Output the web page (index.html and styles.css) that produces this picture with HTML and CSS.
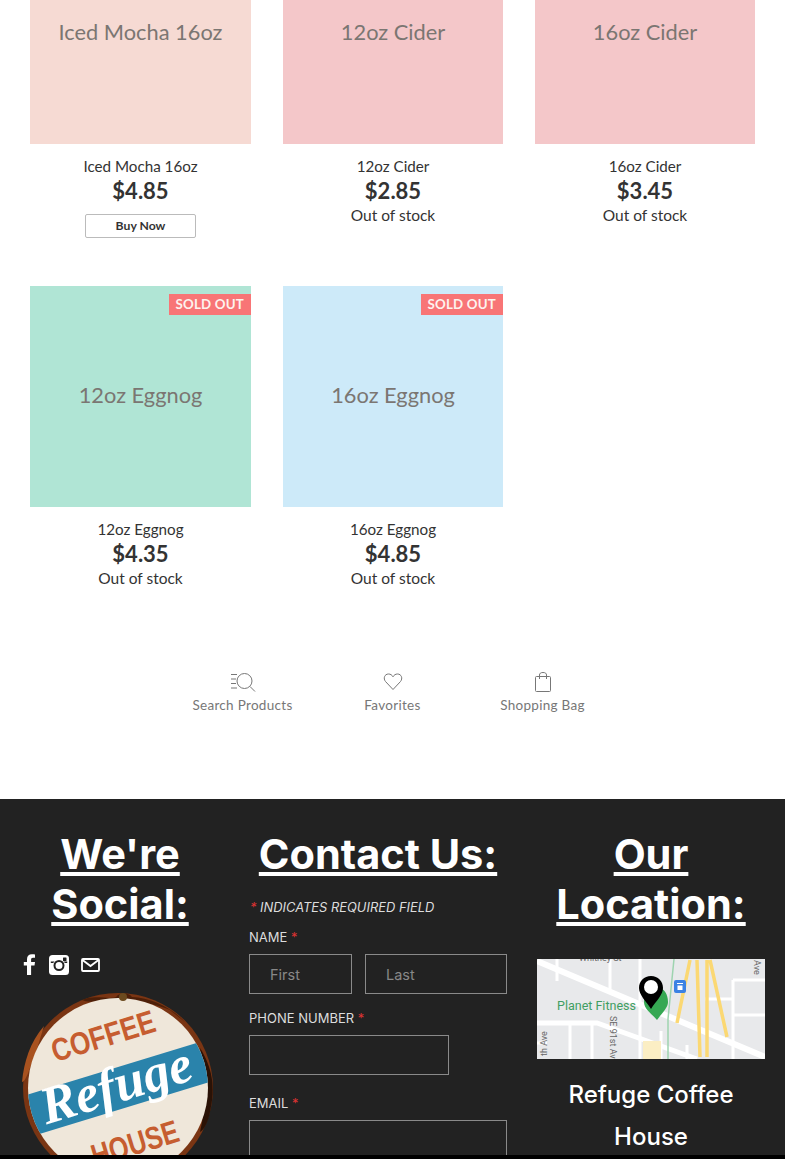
FILE: index.html
```html
<!DOCTYPE html>
<html lang="en">
<head>
    <meta charset="UTF-8">
    <meta name="viewport" content="width=device-width, initial-scale=1.0">
    <title>Refuge Coffee House</title>
    <link rel="stylesheet" href="styles.css">
</head>
<body>
    <div class="products">
        <div class="product">
            <div class="tile tile-beige">Iced Mocha 16oz</div>
            <div class="name">Iced Mocha 16oz</div>
            <div class="price">$4.85</div>
            <button class="buy-btn">Buy Now</button>
        </div>
        <div class="product">
            <div class="tile tile-pink">12oz Cider</div>
            <div class="name">12oz Cider</div>
            <div class="price">$2.85</div>
            <div class="stock">Out of stock</div>
        </div>
        <div class="product">
            <div class="tile tile-pink">16oz Cider</div>
            <div class="name">16oz Cider</div>
            <div class="price">$3.45</div>
            <div class="stock">Out of stock</div>
        </div>
        <div class="product">
            <div class="tile tile-mint">12oz Eggnog<span class="badge">SOLD OUT</span></div>
            <div class="name">12oz Eggnog</div>
            <div class="price">$4.35</div>
            <div class="stock">Out of stock</div>
        </div>
        <div class="product">
            <div class="tile tile-blue">16oz Eggnog<span class="badge">SOLD OUT</span></div>
            <div class="name">16oz Eggnog</div>
            <div class="price">$4.85</div>
            <div class="stock">Out of stock</div>
        </div>
    </div>

    <div class="shop-tools">
        <div class="tool">
            <svg width="26" height="20" viewBox="0 0 26 20" fill="none" stroke="#777" stroke-width="1">
                <path d="M1 2.500h6M1 7h5M1 11.500h5M1 16h6"/>
                <circle cx="14.500" cy="9" r="7.500"/>
                <path d="M20 14.500l5 5"/>
            </svg>
            <span>Search Products</span>
        </div>
        <div class="tool">
            <svg width="20" height="20" viewBox="0 0 20 20" fill="none" stroke="#777" stroke-width="1">
                <path d="M10 17.500L2.500 9.500C0 6.500 1.500 2 5.500 2C7.500 2 9 3 10 4.800C11 3 12.500 2 14.500 2C18.500 2 20 6.500 17.500 9.500Z"/>
            </svg>
            <span>Favorites</span>
        </div>
        <div class="tool">
            <svg width="18" height="20" viewBox="0 0 18 20" fill="none" stroke="#777" stroke-width="1">
                <rect x="1.500" y="4.500" width="15" height="15" rx="1"/>
                <path d="M5.500 7V3C5.500 1.500 6.500 .5 9 .5C11.500 .5 12.500 1.500 12.500 3V7"/>
            </svg>
            <span>Shopping Bag</span>
        </div>
    </div>

    <div class="footer">
        <div class="col-social">
            <h2>We're Social:</h2>
            <div class="social-icons">
                <svg width="14" height="21" viewBox="0 0 14 21" fill="#fff">
                    <path d="M4 21V11.500H.8V8H4V5.200C4 2 6 .3 8.800 .3C10.200 .3 11.300 .4 12 .5V3.700H10C8.500 3.700 8.100 4.500 8.100 5.600V8H12L11.500 11.500H8.100V21Z"/>
                </svg>
                <svg width="20" height="20" viewBox="0 0 20 20">
                    <rect width="20" height="20" rx="3.500" fill="#fff"/>
                    <rect x="1.800" y="6.500" width="16.400" height="1.500" fill="#222"/>
                    <circle cx="10" cy="10.500" r="6.200" fill="#fff"/>
                    <circle cx="10" cy="10.500" r="4.500" fill="none" stroke="#222" stroke-width="2"/>
                    <rect x="14" y="2.500" width="3.500" height="3.500" rx=".5" fill="#222"/>
                </svg>
                <svg width="19" height="14" viewBox="0 0 19 14" fill="none" stroke="#fff" stroke-width="1.800">
                    <rect x="1" y="1" width="17" height="12" rx="1"/>
                    <path d="M1.500 2l8 6 8-6"/>
                </svg>
            </div>
            <svg class="logo" width="200" height="170" viewBox="0 0 200 170">
                <defs>
                    <clipPath id="logo-clip"><circle cx="98" cy="96" r="90"/></clipPath>
                </defs>
                <circle cx="98" cy="96" r="95" fill="#7a3513"/>
                <path d="M62 8C74 2 88 8 96 5C100 0 108 0 112 5C130 6 150 14 165 30L150 18C130 10 110 8 98 10C85 8 72 12 62 8Z" fill="#4d1f08"/>
                <path d="M180 56C192 75 196 95 190 120C188 130 184 138 180 140C186 115 186 85 180 56Z" fill="#2a1206"/>
                <path d="M2 90C4 70 10 50 24 34L16 60C10 75 6 90 2 90Z" fill="#a8521f"/>
                <circle cx="98" cy="96" r="90" fill="#efe7da"/>
                <circle cx="103" cy="5" r="4" fill="#6b4a1e"/>
                <g clip-path="url(#logo-clip)">
                    <g transform="rotate(-17 98 96)">
                        <rect x="-10" y="76" width="216" height="41" fill="#2a83ab"/>
                        <text class="logo-coffee" x="99" y="53" text-anchor="middle" textLength="107" lengthAdjust="spacingAndGlyphs">COFFEE</text>
                        <text class="logo-script" x="97" y="110" text-anchor="middle">Refuge</text>
                        <text class="logo-coffee" x="98" y="165" text-anchor="middle" textLength="90" lengthAdjust="spacingAndGlyphs">HOUSE</text>
                    </g>
                </g>
            </svg>
        </div>

        <div class="col-contact">
            <h2>Contact Us:</h2>
            <p class="required-note"><span class="star">*</span> Indicates required field</p>
            <label class="field-label">Name <span class="star">*</span></label>
            <div class="name-row">
                <input class="input input-first" placeholder="First">
                <input class="input input-last" placeholder="Last">
            </div>
            <label class="field-label">Phone Number <span class="star">*</span></label>
            <input class="input input-phone">
            <label class="field-label label-email">Email <span class="star">*</span></label>
            <input class="input input-email">
        </div>

        <div class="col-location">
            <h2>Our Location:</h2>
            <svg class="map" width="228" height="100" viewBox="0 0 228 100">
                <rect width="228" height="100" fill="#e8e9eb"/>
                <g stroke="#fff" fill="none">
                    <path d="M0 2L228 98" stroke-width="6"/>
                    <path d="M0 64H60L160 100" stroke-width="5"/>
                    <path d="M33 64V100M55 64V100M103 0V100M73 0V30M20 0V22M228 21H196M196 21V100M228 56H196M168 40H196" stroke-width="3"/>
                    <path d="M0 84H10M124 72V100M150 86V100" stroke-width="3"/>
                </g>
                <path d="M153 1L140 64M160 1L163 98M170 1L170 98M173 1L190 78" stroke="#fbd873" stroke-width="3.500" fill="none"/>
                <path d="M106 82H124V100H106Z" fill="#fbeec4"/>
                <path d="M137 0L131 60V100" stroke="#9ed4b0" stroke-width="1.500" fill="none"/>
                <path d="M121 29C113 29 107 35 107 43C107 50 115 55 120 61C125 54 131 49 131 43C131 35 127 29 121 29Z" fill="#36a853"/>
                <path d="M114 17C107 17 102 22 102 29C102 36 109 42 114 50C119 42 126 36 126 29C126 22 121 17 114 17Z" fill="#000"/>
                <circle cx="114" cy="28" r="7" fill="#fff"/>
                <rect x="137" y="21" width="12" height="13" rx="2" fill="#3b82e4"/>
                <path d="M140 24H146V25H140ZM140.500 26.500H145.500V31H140.500Z" fill="#fff"/>
                <text class="map-place" x="20" y="51">Planet Fitness</text>
                <text class="map-road" x="42" y="2">Whitney St</text>
                <text class="map-road" transform="translate(73 57) rotate(90)">SE 91st Ave</text>
                <text class="map-road" transform="translate(10 97) rotate(-90)">th Ave</text>
                <text class="map-road" transform="translate(217 1) rotate(90)">Ave</text>
            </svg>
            <p class="location-name">Refuge Coffee House</p>
        </div>
    </div>
    <div class="bottom-bar"></div>
</body>
</html>
```

FILE: styles.css
```css
body {
    margin: 0;
    background: #fff;
    font-family: 'Lato', sans-serif;
    color: #333;
}

html, body {
    height: 1159px;
    overflow: hidden;
}

.products {
    display: grid;
    grid-template-columns: 221px 220px 220px;
    column-gap: 32px;
    row-gap: 48px;
    padding: 0 30px;
    margin-top: -77px;
}

.product {
    text-align: center;
    min-height: 315px;
}

.tile {
    position: relative;
    box-sizing: border-box;
    height: 221px;
    padding-bottom: 4px;
    display: flex;
    align-items: center;
    justify-content: center;
    font-size: 21.800px;
    color: #7b7672;
    margin-bottom: 12px;
}

.tile-beige { background: #f6dad3; }
.tile-pink { background: #f4c7c9; }
.tile-mint { background: #b0e5d5; }
.tile-blue { background: #cdeaf9; }

.badge {
    position: absolute;
    top: 8px;
    right: 0;
    background: #f87576;
    color: #fdf3ee;
    font-size: 13.300px;
    font-weight: 700;
    line-height: 21px;
    padding: 0 7px;
    letter-spacing: .2px;
}

.name {
    font-size: 15.200px;
    line-height: 20px;
}

.price {
    font-size: 22px;
    font-weight: 700;
    line-height: 29px;
    color: #333;
}

.stock {
    font-size: 15.500px;
    line-height: 20px;
}

.buy-btn {
    display: block;
    width: 111px;
    height: 24px;
    margin: 9px auto 0;
    background: #fff;
    border: 1px solid #bbb;
    border-radius: 2px;
    font-family: 'Lato', sans-serif;
    font-size: 12.200px;
    font-weight: 700;
    color: #333;
    padding: 0 0 2px;
}

.shop-tools {
    display: flex;
    justify-content: center;
    margin-top: 71px;
    height: 127px;
}

.tool {
    width: 150px;
    display: flex;
    flex-direction: column;
    align-items: center;
    gap: 5px;
    font-size: 13.500px;
    letter-spacing: .3px;
    color: #777;
}

.footer {
    display: flex;
    background: #222;
    height: 360px;
    overflow: hidden;
    color: #fff;
}

.footer h2 {
    margin: 0;
    font-family: 'Inter', sans-serif;
    font-size: 41.500px;
    line-height: 50px;
    font-weight: 700;
    text-align: center;
    text-decoration: underline;
}

.col-social {
    width: 240px;
    padding-top: 30px;
}

.social-icons {
    display: flex;
    align-items: center;
    gap: 12px;
    padding-left: 23px;
    margin-top: 25px;
}

.logo {
    display: block;
    margin: 17px 0 0 20px;
    overflow: visible;
}

.logo-coffee {
    font-family: 'Liberation Sans', sans-serif;
    font-weight: 700;
    font-size: 32px;
    fill: #c65d30;
}

.logo-script {
    font-family: 'Liberation Serif', serif;
    font-weight: 700;
    font-style: italic;
    font-size: 53px;
    fill: #fff;
}

.col-contact {
    width: 258px;
    margin-left: 9px;
    padding-top: 30px;
}

.required-note {
    margin: 20px 0 0 1px;
    font-family: 'Inter', sans-serif;
    font-size: 12.900px;
    line-height: 18px;
    font-style: italic;
    text-transform: uppercase;
    color: #ddd;
}

.star {
    color: #d33;
}

.field-label {
    display: block;
    font-family: 'Inter', sans-serif;
    font-size: 13px;
    line-height: 16px;
    text-transform: uppercase;
    color: #ddd;
    margin-top: 12px;
    margin-bottom: 9px;
}

.label-email {
    margin-top: 20px;
}

.name-row {
    display: flex;
    gap: 13px;
    margin-bottom: 16px;
}

.input {
    display: block;
    box-sizing: border-box;
    height: 40px;
    background: transparent;
    border: 1px solid #8a8a8a;
    padding: 0 20px;
    font-family: 'Inter', sans-serif;
    font-size: 14.500px;
    color: #fff;
    border-radius: 0;
}

.input::placeholder {
    color: #888;
}

.input-first { width: 103px; }
.input-last { width: 142px; }
.input-phone { width: 200px; }
.input-email { width: 258px; }

.col-location {
    width: 228px;
    margin-left: 30px;
    padding-top: 30px;
}

.map {
    display: block;
    margin-top: 30px;
}

.map-place {
    font-family: 'Roboto', sans-serif;
    font-size: 12.500px;
    fill: #3f9e62;
}

.map-road {
    font-family: 'Roboto', sans-serif;
    font-size: 9px;
    fill: #666;
}

.location-name {
    margin: 15px 0 0;
    font-family: 'Inter', sans-serif;
    font-size: 24px;
    line-height: 42px;
    font-weight: 500;
    text-align: center;
}

.bottom-bar {
    position: fixed;
    left: 0;
    right: 0;
    bottom: 0;
    height: 4px;
    background: #000;
}
```
